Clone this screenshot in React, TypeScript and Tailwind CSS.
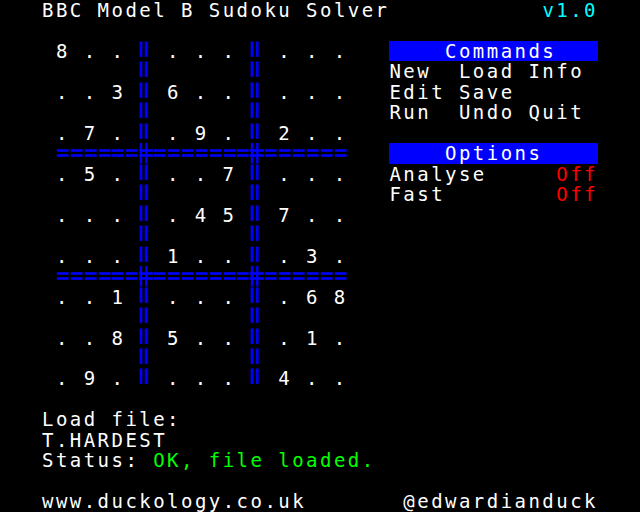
import React from "react";

// Mode 7 style screen: 40 columns x 25 rows
const grid = [
  "8........",
  "..36.....",
  ".7..9.2..",
  ".5...7...",
  "....457..",
  "...1...3.",
  "..1....68",
  "..85...1.",
  ".9....4..",
];

const BLUE = "#0000ff";

const VBar = ({ full }: { full?: boolean }) => (
  <svg width="13.9" height="20.48" viewBox="0 0 13.9 20.48" className="shrink-0 block">
    <rect x="0" y={full ? 0 : 0.3} width="4" height={full ? 20.48 : 15.8} fill="#000080" opacity="0.5" />
    <rect x="5" y={full ? 0 : 0.3} width="4.5" height={full ? 20.48 : 15.8} fill="#000080" opacity="0.5" />
    <rect x="0.8" y={full ? 0 : 0.6} width="2.4" height={full ? 20.48 : 15.2} fill={BLUE} />
    <rect x="6.1" y={full ? 0 : 0.6} width="2.4" height={full ? 20.48 : 15.2} fill={BLUE} />
  </svg>
);

const HSep = ({ cross }: { cross?: boolean }) => (
  <svg width="13.9" height="20.48" viewBox="0 0 13.9 20.48" className="shrink-0 block">
    <rect x={cross ? 0 : 0.8} y="6.2" width={cross ? 13.9 : 11.8} height="2.6" fill={BLUE} />
    <rect x={cross ? 0 : 0.8} y="11.2" width={cross ? 13.9 : 11.8} height="2.6" fill={BLUE} />
    {cross && (
      <>
        <rect x="0.8" y="0" width="2.4" height="20.48" fill={BLUE} />
        <rect x="6.1" y="0" width="2.4" height="20.48" fill={BLUE} />
      </>
    )}
  </svg>
);

const Cell = ({ ch }: { ch: string }) => (
  <div className="w-[13.9px] shrink-0 h-[20.48px]">{ch === "-" ? "" : ch}</div>
);

function GridRow({ r }: { r: number }) {
  const cells = [];
  for (let c = 0; c < 21; c++) {
    const isBar = c === 6 || c === 14;
    if (r % 2 === 0) {
      if (isBar) cells.push(<VBar key={c} />);
      else if (c % 2 === 0) {
        const idx = Math.floor(c / 8) * 3 + (c % 8) / 2;
        cells.push(<Cell key={c} ch={grid[r / 2][idx]} />);
      } else cells.push(<Cell key={c} ch="-" />);
    } else if (r === 5 || r === 11) {
      cells.push(<HSep key={c} cross={isBar} />);
    } else {
      if (isBar) cells.push(<VBar key={c} />);
      else cells.push(<Cell key={c} ch="-" />);
    }
  }
  return <div className="flex h-[20.48px]">{cells}</div>;
}

const Line = ({ children, className = "" }: { children?: React.ReactNode; className?: string }) => (
  <div className={`h-[20.48px] whitespace-pre ${className}`}>{children}</div>
);

export default function App() {
  return (
    <div className="w-[640px] h-[512px] bg-black text-white overflow-hidden pl-[42px] font-['DejaVu_Sans_Mono',monospace] text-[19px] leading-[20.48px] tracking-[2.46px]">
      <Line>
        {"BBC Model B Sudoku Solver           "}
        <span className="text-[#00ffff]">v1.0</span>
      </Line>
      <Line />
      <div className="flex">
        <div className="w-[13.9px] shrink-0" />
        <div className="flex flex-col w-[291.9px] shrink-0">
          {Array.from({ length: 17 }, (_, r) => (
            <GridRow key={r} r={r} />
          ))}
        </div>
        <div className="w-[41.7px] shrink-0" />
        <div className="flex flex-col w-[208.5px] shrink-0">
          <Line className="bg-[#0000ff]">{"    Commands"}</Line>
          <Line>{"New  Load Info"}</Line>
          <Line>{"Edit Save"}</Line>
          <Line>{"Run  Undo Quit"}</Line>
          <Line />
          <Line className="bg-[#0000ff]">{"    Options"}</Line>
          <Line>
            {"Analyse     "}
            <span className="text-[#ff0000]">Off</span>
          </Line>
          <Line>
            {"Fast        "}
            <span className="text-[#ff0000]">Off</span>
          </Line>
        </div>
      </div>
      <Line />
      <Line>{"Load file:"}</Line>
      <Line>{"T.HARDEST"}</Line>
      <Line>
        {"Status: "}
        <span className="text-[#00ff00]">OK, file loaded.</span>
      </Line>
      <Line />
      <Line>
        {"www.duckology.co.uk       @edwardianduck"}
      </Line>
    </div>
  );
}
